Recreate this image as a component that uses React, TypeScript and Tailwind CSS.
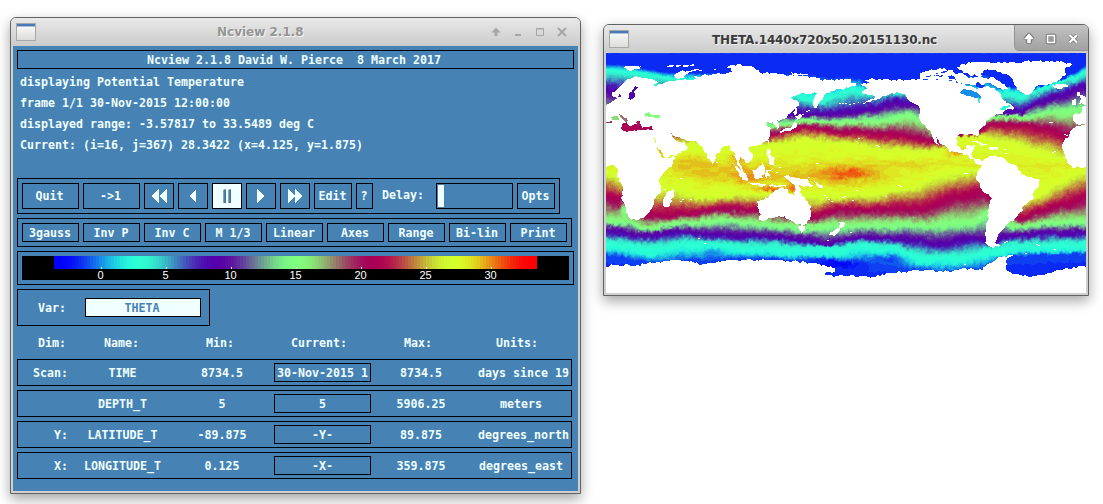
import React from "react";

type Pt = [number, number];

const gauss = (t: number): string => {
  const c = Math.max(0, Math.min(1, t));
  const r = Math.round(255 * c);
  const g = Math.round((255 * (1 - Math.cos(6 * Math.PI * c))) / 2);
  return `rgb(${r},${g},${255 - r})`;
};

const pts = (s: string): Pt[] =>
  s
    .trim()
    .split(/\s+/)
    .map((p) => p.split(",").map(Number) as Pt);

const shift = (line: Pt[], dy: number): Pt[] => line.map(([x, y]) => [x, y + dy]);

const SOUTHERN_COLD = pts("0,572 120,584 250,575 400,580 550,588 640,588 700,594 750,578 850,586 950,614 1050,614 1150,596 1250,578 1440,574");

/* Isotherm curves, north to south. Units are thirds of a pixel. */
const ISOTHERMS: { t: number; line: Pt[] }[] = [
  { t: 0.05, line: pts("0,0 1440,0") },
  { t: 0.044, line: pts("0,32 230,58 560,60 730,72 800,90 1000,70 1130,60 1190,100 1240,100 1300,95 1360,80 1400,60 1440,35") },
  { t: 0.167, line: pts("0,50 90,58 200,75 560,125 640,140 740,110 800,116 900,108 1100,140 1200,115 1250,130 1280,112 1340,92 1400,72 1440,56") },
  { t: 0.333, line: pts("0,110 80,115 560,183 700,180 800,166 860,146 930,150 1180,182 1240,178 1300,145 1350,128 1440,100") },
  { t: 0.5, line: pts("0,190 150,188 480,220 600,200 700,205 830,202 900,185 945,200 980,225 1150,192 1250,190 1340,175 1440,172") },
  { t: 0.667, line: pts("0,208 100,222 490,243 540,230 600,220 700,235 850,243 930,255 990,262 1110,235 1150,212 1240,213 1320,225 1390,248 1440,270") },
  { t: 0.833, line: pts("0,240 250,275 480,275 600,262 700,272 850,290 960,302 1010,285 1080,250 1120,250 1200,268 1300,300 1380,318 1440,330") },
  { t: 0.86, line: pts("0,338 700,335 1000,335 1440,336") },
  { t: 0.833, line: pts("0,350 50,375 170,405 300,425 460,422 620,430 700,432 800,422 900,400 1000,365 1100,348 1250,440 1300,425 1360,390 1400,365 1440,350") },
  { t: 0.667, line: pts("0,430 50,450 130,487 250,480 350,465 450,468 620,488 700,465 800,468 950,465 1050,432 1130,415 1160,440 1240,492 1300,474 1380,450 1440,432") },
  { t: 0.5, line: pts("0,506 60,510 130,525 250,506 350,498 480,515 600,525 700,517 850,517 1000,515 1100,507 1150,480 1220,520 1300,512 1440,508") },
  { t: 0.333, line: pts("0,532 120,545 200,532 300,543 450,546 600,558 670,572 760,550 900,556 1000,570 1100,553 1160,568 1200,546 1300,540 1440,535") },
  { t: 0.19, line: shift(SOUTHERN_COLD, -10) },
  { t: 0.14, line: shift(SOUTHERN_COLD, 16) },
  { t: 0.055, line: pts("0,606 80,620 150,630 230,620 450,618 640,618 700,630 850,640 1000,658 1120,648 1200,610 1440,602") },
  { t: 0.03, line: pts("0,720 1440,720") },
];

/* Warm and cold anomalies: x, y, radius x, radius y, amplitude */
const ANOMALIES = [
  [735, 360, 70, 16, 0.05],
  [680, 372, 190, 32, 0.045],
  [320, 360, 140, 36, 0.03],
  [250, 322, 60, 20, 0.025],
  [495, 408, 50, 9, 0.08],
  [440, 372, 60, 25, 0.04],
  [560, 405, 16, 22, 0.06],
  [1045, 298, 35, 12, 0.05],
  [165, 290, 14, 18, 0.05],
  [395, 310, 25, 25, 0.04],
  [900, 330, 160, 14, 0.015],
  [1390, 325, 20, 12, 0.04],
  [320, 592, 36, 14, -0.04],
  [850, 614, 60, 14, -0.05],
  [700, 632, 60, 14, -0.04],
  [130, 605, 60, 10, 0.02],
  [55, 465, 14, 22, -0.12],
];

const yAt = (line: Pt[], x: number): number => {
  for (let i = 1; i < line.length; i++) {
    if (x <= line[i][0]) {
      const [x0, y0] = line[i - 1];
      const [x1, y1] = line[i];
      const f = (x - x0) / (x1 - x0);
      return y0 + (y1 - y0) * f * f * (3 - 2 * f);
    }
  }
  return line[line.length - 1][1];
};

const hash = (x: number, y: number): number => {
  let h = (Math.imul(x, 374761393) + Math.imul(y, 668265263)) | 0;
  h = Math.imul(h ^ (h >>> 13), 1274126177);
  return ((h ^ (h >>> 16)) >>> 0) / 4294967295;
};

const noise = (x: number, y: number): number => {
  const xi = Math.floor(x);
  const yi = Math.floor(y);
  const s = (f: number) => f * f * (3 - 2 * f);
  const u = s(x - xi);
  const v = s(y - yi);
  const a = hash(xi, yi) * (1 - u) + hash(xi + 1, yi) * u;
  const b = hash(xi, yi + 1) * (1 - u) + hash(xi + 1, yi + 1) * u;
  return (a * (1 - v) + b * v) * 2 - 1;
};

const LEVELS = 90;

const oceanPaths = (): { d: string; fill: string }[] => {
  const runs: string[][] = Array.from({ length: LEVELS + 1 }, () => []);
  const columns = Array.from({ length: 480 }, (_, i) =>
    ISOTHERMS.map((c) => yAt(c.line, i * 3)),
  );
  for (let j = 0; j < 226; j++) {
    let start = 0;
    let current = -1;
    for (let i = 0; i <= 480; i++) {
      let level = -2;
      if (i < 480) {
        const x = i * 3;
        const y =
          j * 3 +
          (j < 22 ? 0.3 : 1) *
            (3 * noise(i / 13, j / 9) + 5 * noise(i / 3.2 + 50, j / 3.5) + 3 * noise(i / 1.4, j / 1.8 + 90));
        const ys = columns[i];
        let k = 1;
        while (k < ys.length - 1 && y > ys[k]) k++;
        const span = Math.max(1, ys[k] - ys[k - 1]);
        const f = Math.max(0, Math.min(1, (y - ys[k - 1]) / span));
        let t = ISOTHERMS[k - 1].t + (ISOTHERMS[k].t - ISOTHERMS[k - 1].t) * f;
        for (const [ax, ay, rx, ry, amp] of ANOMALIES) {
          const q = ((x - ax) / rx) ** 2 + ((y - ay) / ry) ** 2;
          if (q < 5) t += amp * Math.exp(-q);
        }
        if (t > 0.8) t += 0.01 * noise(i / 9 + 7, j / 2.5);
        level = Math.max(0, Math.min(LEVELS, Math.round(t * LEVELS)));
      }
      if (level !== current) {
        if (current >= 0) runs[current].push(`M${start} ${j}h${i - start}v1h${start - i}z`);
        start = i;
        current = level;
      }
    }
  }
  return runs
    .map((r, n) => ({ d: r.join(""), fill: gauss(n / LEVELS) }))
    .filter((p) => p.d.length > 0);
};

const OCEAN = oceanPaths();

/* Breaks straight edges into a ragged coastline. */
const coast = (s: string, amp = 4): string => {
  const p = pts(s);
  const out: string[] = [];
  p.forEach(([x0, y0], i) => {
    const [x1, y1] = p[(i + 1) % p.length];
    const len = Math.hypot(x1 - x0, y1 - y0);
    const n = Math.max(1, Math.floor(len / 7));
    for (let k = 0; k < n; k++) {
      const f = k / n;
      const d = k === 0 ? 0 : amp * (hash(Math.round(x0 + k * 17), Math.round(y0 + k * 31)) * 2 - 1);
      const nx = len ? -(y1 - y0) / len : 0;
      const ny = len ? (x1 - x0) / len : 0;
      out.push(`${(x0 + (x1 - x0) * f + nx * d).toFixed(1)},${(y0 + (y1 - y0) * f + ny * d).toFixed(1)}`);
    }
  });
  return out.join(" ");
};

const LAND = [
  // Eurasia and Africa
  "-9,156 8,152 20,145 36,134 46,130 40,122 34,136 20,134 18,118 45,98 58,84 80,74 100,72 125,76 145,80 155,88 150,94 170,92 195,84 215,80 236,78 270,76 262,70 290,66 330,64 385,56 360,42 395,34 425,40 445,44 462,58 520,64 545,70 570,66 605,68 610,74 640,74 642,80 700,80 735,78 735,90 752,92 748,100 720,102 712,112 690,108 672,120 655,126 650,140 640,146 636,158 624,166 620,148 626,132 640,118 618,122 600,122 580,124 555,134 572,142 580,156 560,175 545,190 530,198 518,204 512,200 520,222 514,228 504,214 500,208 484,206 480,216 494,226 492,246 484,262 470,270 452,278 430,282 430,292 442,308 438,320 426,332 416,320 402,312 400,324 412,352 404,350 392,334 390,318 386,300 374,292 370,276 356,280 344,292 328,306 325,326 318,334 304,316 292,282 284,278 265,264 240,262 212,252 196,240 206,258 218,266 236,268 246,282 224,300 176,314 164,292 140,250 160,300 174,316 208,312 200,332 168,366 160,380 164,410 158,424 144,440 142,460 130,478 112,496 76,500 66,486 58,462 45,435 52,412 46,390 34,372 38,350 22,336 -9,340",
  // North and South America
  "772,84 800,76 850,80 900,80 945,76 960,82 1000,78 1040,84 1075,92 1090,100 1120,106 1150,100 1176,116 1192,140 1212,152 1226,168 1196,174 1180,184 1156,192 1140,204 1142,214 1118,234 1120,256 1108,246 1090,244 1060,244 1050,256 1052,276 1066,290 1082,288 1086,274 1106,276 1100,296 1096,304 1110,318 1128,324 1150,308 1190,314 1204,328 1236,342 1244,362 1262,370 1302,382 1300,398 1284,416 1282,440 1252,458 1244,478 1224,504 1202,514 1194,528 1180,540 1174,556 1168,570 1184,580 1156,582 1138,568 1140,520 1148,480 1158,436 1128,410 1112,382 1116,352 1128,336 1108,328 1088,310 1060,300 1030,296 1020,282 1006,274 990,250 1000,276 984,262 976,238 952,214 940,196 940,164 922,150 906,140 896,124 880,120 850,124 830,130 812,140 800,142 790,148 750,152 780,146 808,130 782,124 766,118 784,106 764,96 790,90",
  // Canadian Arctic
  "940,62 960,54 1000,46 1040,52 1050,64 1070,60 1086,76 1110,72 1140,76 1164,74 1196,92 1206,108 1190,112 1160,96 1140,90 1120,102 1086,92 1030,82 940,80",
  "1052,42 1072,32 1130,26 1200,28 1190,34 1160,40 1124,62 1128,70 1090,66 1060,50",
  // Greenland
  "1134,44 1160,36 1200,30 1260,24 1310,26 1360,26 1398,34 1376,46 1380,62 1366,78 1330,92 1296,98 1284,110 1272,124 1260,126 1240,114 1226,96 1222,84 1206,66 1182,56",
  "1338,96 1360,92 1384,96 1388,102 1366,107 1344,104",
  // Western Europe and West Africa
  "1412,120 1420,114 1424,126 1446,138 1446,158 1418,154 1424,140",
  "1398,142 1412,138 1412,154 1398,156",
  "1404,184 1426,180 1430,160 1446,160 1446,212 1414,214 1404,206",
  "1446,214 1414,218 1398,228 1390,244 1374,264 1370,290 1376,306 1388,334 1408,344 1446,340",
  // Antarctica
  "-6,638 95,636 140,630 206,622 250,626 300,635 380,620 480,622 560,625 640,634 688,646 686,656 655,662 660,668 720,668 800,672 850,660 930,652 1040,655 1070,645 1130,652 1145,632 1180,612 1222,606 1200,625 1202,655 1250,668 1290,671 1320,662 1360,650 1446,638 1446,726 -6,726",
  // Australia
  "452,446 486,434 500,420 522,404 546,408 546,418 566,426 570,394 578,396 590,430 606,444 616,460 614,484 602,512 590,518 566,512 552,500 536,490 504,494 480,502 460,500 464,484",
  "576,520 596,520 594,534 586,540",
  // New Guinea and Indonesia
  "524,366 548,366 576,374 602,380 610,388 628,404 600,400 584,396 560,392 546,380",
  "438,350 452,348 470,330 478,346 470,376 446,376",
  "378,330 396,342 424,370 424,388 406,372 392,352",
  "420,386 450,390 480,392 478,398 440,396",
  "490,396 540,398 540,402 492,402",
  "478,350 500,346 484,354 494,376 486,366 480,380",
  "620,382 640,396 652,404 636,402",
  // Philippines, Taiwan and Japan
  "482,286 490,288 492,306 506,316 506,338 494,336 486,310",
  "484,262 490,262 486,274",
  "520,238 532,228 552,226 564,208 570,206 572,222 560,228 540,234 524,240",
  "568,190 580,182 590,188 574,200",
  "562,150 570,160 572,184 564,186",
  // New Zealand
  "690,496 702,508 718,512 712,522 700,528 702,512",
  "698,526 704,532 684,549 662,549",
  // Madagascar
  "182,420 200,406 204,416 190,460 174,462 172,444",
  // Caribbean
  "1088,264 1110,262 1148,278 1130,278 1110,268",
  "1150,282 1178,284 1176,292 1150,288",
  // Arctic islands
  "38,42 70,38 108,38 100,48 66,52",
  "178,38 264,34 262,40 200,41",
  "204,66 222,56 260,50 290,52 250,58 232,76 210,76",
  "556,58 606,62 604,68 560,66",
  "1164,568 1184,578 1166,576",
];

const LAKES: { p: string; t: number }[] = [
  // Mediterranean
  { p: "-6,206 16,204 22,208 -6,212", t: 0.62 },
  { p: "14,192 34,188 40,200 20,202", t: 0.54 },
  { p: "40,184 50,188 66,204 58,208 44,194", t: 0.59 },
  { p: "48,212 62,206 70,218 84,214 94,214 110,224 136,218 140,230 112,230 84,232 62,236 46,228", t: 0.667 },
  { p: "90,206 102,204 104,216 94,218", t: 0.63 },
  // Black Sea
  { p: "116,182 128,178 138,186 164,188 162,194 116,192", t: 0.5 },
  // Baltic
  { p: "88,100 96,102 84,114 88,128 74,140 66,138 70,120", t: 0.32 },
  // White Sea
  { p: "142,96 158,92 156,97", t: 0.15 },
  // Hudson Bay
  { p: "1062,120 1074,106 1090,110 1112,116 1124,128 1126,136 1100,132 1080,128", t: 0.09 },
  { p: "1116,132 1124,136 1122,150 1116,146", t: 0.13 },
  { p: "1108,92 1118,86 1128,96 1142,94 1128,106 1112,102", t: 0.05 },
  { p: "1026,70 1044,68 1050,80 1030,78", t: 0.05 },
  { p: "960,68 1010,66 1010,69 960,72", t: 0.05 },
  { p: "984,60 1024,54 1010,60", t: 0.05 },
  // Gulf of St Lawrence
  { p: "1178,164 1200,160 1216,158 1190,172", t: 0.15 },
];

const ISLANDS: Pt[] = [
  [276, 557], [294, 571], [756, 257], [632, 330], [750, 412], [838, 430], [878, 396], [884, 400],
  [1074, 362], [1080, 362], [1120, 494], [664, 563], [230, 440], [222, 444], [254, 440], [222, 376],
  [812, 276], [818, 280], [732, 537], [740, 441], [714, 430], [710, 432], [1290, 575], [1296, 577],
  [1330, 207], [1336, 208], [1340, 297], [1346, 294], [1376, 244], [1382, 246], [656, 428], [662, 434],
  [668, 440], [676, 446], [600, 378], [606, 372], [520, 344], [512, 358], [1196, 290], [1198, 300],
  [1076, 634], [1196, 567], [1202, 566], [176, 408], [700, 150], [708, 151], [718, 152], [730, 153],
  [742, 152], [588, 184], [600, 176], [606, 172], [326, 50], [330, 328], [1344, 590], [1258, 601],
];

const OceanMap = () => (
  <svg viewBox="0 0 480 240" className="block h-[240px] w-[480px] bg-white" shapeRendering="crispEdges">
    {OCEAN.map((p) => (
      <path key={p.fill} d={p.d} fill={p.fill} />
    ))}
    <g transform="scale(0.333333)">
      {LAND.map((p) => (
        <polygon key={p} points={coast(p)} fill="#fff" />
      ))}
      {LAKES.map((l) => (
        <polygon key={l.p} points={coast(l.p, 3)} fill={gauss(l.t)} />
      ))}
      {ISLANDS.map(([x, y]) => (
        <rect key={`${x}-${y}`} x={Math.floor(x / 3) * 3} y={Math.floor(y / 3) * 3} width={6} height={3} fill="#fff" />
      ))}
    </g>
  </svg>
);

const WindowIcon = () => (
  <svg width="20" height="18" viewBox="0 0 20 18" shapeRendering="crispEdges">
    <defs>
      <linearGradient id="page" x1="0" y1="0" x2="0" y2="1">
        <stop offset="0" stopColor="#fdfdfc" />
        <stop offset="1" stopColor="#dcddd9" />
      </linearGradient>
    </defs>
    <rect x="0.5" y="0.5" width="19" height="17" fill="url(#page)" stroke="#a5a8a8" />
    <rect x="1" y="1" width="18" height="2" fill="#4a7ab5" />
    <rect x="1" y="3" width="18" height="1" fill="#a9bdd6" />
  </svg>
);

const Btn = ({ children, className }: { children?: React.ReactNode; className: string }) => (
  <button type="button" className={`flex items-center justify-center border border-black ${className}`}>
    {children}
  </button>
);

const Arrow = ({ d }: { d: string }) => (
  <svg className="shrink-0" width="20" height="16" viewBox="0 0 20 16" fill="#f0ffff" shapeRendering="crispEdges">
    <path d={d} />
  </svg>
);

const ColorBar = () => (
  <div className="flex h-[34px] w-[557px] border border-black p-1">
    <svg width="547" height="24" viewBox="0 0 547 24" className="block bg-black" shapeRendering="crispEdges">
      {Array.from({ length: 161 }, (_, i) => (
        <rect key={i} x={32 + i * 3} y="0" width="3" height="13" fill={gauss((i - 1) / 158)} />
      ))}
      {[0, 5, 10, 15, 20, 25, 30].map((v, i) => (
        <g key={v} fill="#fff">
          <rect x={79 + i * 65} y="11" width="1" height="2" />
          <text
            x={78.5 + i * 65}
            y="23"
            textAnchor="middle"
            fontSize="11"
            fontWeight="400"
            fontFamily="Liberation Sans, sans-serif"
          >
            {v}
          </text>
        </g>
      ))}
    </svg>
  </div>
);

const ROWS = [
  { dim: "Scan:", name: "TIME", min: "8734.5", cur: "30-Nov-2015 1", max: "8734.5", units: "days since 19" },
  { dim: "", name: "DEPTH_T", min: "5", cur: "5", max: "5906.25", units: "meters" },
  { dim: "Y:", name: "LATITUDE_T", min: "-89.875", cur: "-Y-", max: "89.875", units: "degrees_north" },
  { dim: "X:", name: "LONGITUDE_T", min: "0.125", cur: "-X-", max: "359.875", units: "degrees_east" },
];

const Frame = ({ className, children }: { className: string; children: React.ReactNode }) => (
  <section
    className={`flex flex-col rounded-t-[6px] border border-[#636363] bg-[#cfcfcf] shadow-[0_5px_13px_0_rgba(0,0,0,0.36)] ${className}`}
  >
    {children}
  </section>
);

const ControlWindow = () => (
  <Frame className="mt-[17px] ml-[10px] h-[477px] w-[571px]">
    <header className="flex h-7 shrink-0 items-center rounded-t-[5px] bg-linear-to-b from-[#e9e9e9] to-[#cbcbcb] pl-[5px]">
      <WindowIcon />
      <h1 className="ml-[181px] w-[92px] whitespace-nowrap font-['DejaVu_Sans'] text-[12px] font-bold text-[#959595] [text-shadow:1px_1px_0_#f5f5f5]">
        Ncview 2.1.8
      </h1>
      <svg className="ml-[182px]" width="80" height="14" viewBox="0 0 80 14" fill="none" stroke="#a6a6a6">
        <path d="M5 2.500L0.500 7.500H3.500V11h3V7.500H9.500z" fill="#a6a6a6" stroke="none" />
        <path d="M24 10h6" strokeWidth="2" />
        <path d="M45.500 3.500h7v7h-7z M45 4h8" />
        <path d="M67 3l8 8M75 3l-8 8" strokeWidth="2" />
      </svg>
    </header>
    <main className="mx-0.5 h-[445px] bg-[#4682b4] px-1 pt-1 font-['DejaVu_Sans_Mono',monospace] text-[11.63px] leading-[21px] font-bold text-[#f0ffff]">
      <div className="flex h-[19px] w-[557px] items-center justify-center border border-black pt-0.5 pr-[3px] whitespace-pre">
        {"Ncview 2.1.8 David W. Pierce  8 March 2017"}
      </div>
      <div className="h-[109px] pt-[3px] pl-[3px] whitespace-pre">
        <p>displaying Potential Temperature</p>
        <p>frame 1/1 30-Nov-2015 12:00:00</p>
        <p>displayed range: -3.57817 to 33.5489 deg C</p>
        <p>Current: (i=16, j=367) 28.3422 (x=4.125, y=1.875)</p>
      </div>
      <div className="flex h-9 w-[543px] gap-1 border border-black p-1">
        <Btn className="w-[57px] pr-0.5">Quit</Btn>
        <Btn className="w-[57px] pr-0.5">-&gt;1</Btn>
        <Btn className="w-[30px]"><Arrow d="M10 0v16L2 8zM18 0v16L10 8z" /></Btn>
        <Btn className="w-[30px]"><Arrow d="M13 1v14L6 8z" /></Btn>
        <Btn className="w-[30px] bg-[#f0ffff]">
          <svg width="8" height="14" fill="#4682b4" stroke="#4a6480" shapeRendering="crispEdges">
            <path d="M.5.5h2v13h-2zM5.500.5h2v13h-2z" strokeWidth=".6" />
          </svg>
        </Btn>
        <Btn className="w-[30px]"><Arrow d="M6 1v14l7-7z" /></Btn>
        <Btn className="w-[30px]"><Arrow d="M3 1v14l7-7zM10 1v14l7-7z" /></Btn>
        <Btn className="w-[38px] pr-px">Edit</Btn>
        <Btn className="w-[17px] pr-px">?</Btn>
        <label className="flex w-[55px] items-center pb-0.5 pl-[5px]">Delay:</label>
        <div className="flex w-[77px] border border-black p-px">
          <span className="w-1.5 bg-[#f0ffff]" />
        </div>
        <Btn className="w-[38px] pr-px">Opts</Btn>
      </div>
      <div className="mt-1 flex h-[29px] w-[555px] gap-1 border border-black p-1">
        {["3gauss", "Inv P", "Inv C", "M 1/3", "Linear", "Axes", "Range", "Bi-lin", "Print"].map((b) => (
          <Btn key={b} className="w-[57px] pt-0.5 pr-px">{b}</Btn>
        ))}
      </div>
      <div className="mt-1">
        <ColorBar />
      </div>
      <div className="mt-1 flex h-[37px] w-[193px] border border-black pt-2">
        <span className="w-[67px] pt-px pl-5 leading-[18px]">Var:</span>
        <Btn className="h-[19px] w-[116px] bg-[#f0ffff] pt-0.5 pr-0.5 text-[#4682b4]">THETA</Btn>
      </div>
      <div className="flex h-[33px] items-center pt-px pl-[21px]">
        <span className="w-[66px]">Dim:</span>
        <span className="w-[102px]">Name:</span>
        <span className="w-[85px]">Min:</span>
        <span className="w-[113px]">Current:</span>
        <span className="w-[92px]">Max:</span>
        <span>Units:</span>
      </div>
      <div className="flex flex-col gap-1">
        {ROWS.map((r) => (
          <div key={r.name} className="flex h-[27px] w-[555px] items-center border border-black leading-[23px] whitespace-pre">
            <span className="w-[50px] pt-0.5 text-right">{r.dim}</span>
            <span className="w-[109px] pt-0.5 text-center">{r.name}</span>
            <span className="w-[90px] pt-0.5 text-center">{r.min}</span>
            <span className="ml-[7px] flex h-[19px] w-[97px] items-center justify-center overflow-hidden border border-black pt-0.5 leading-[17px]">
              {r.cur}
            </span>
            <span className="w-[100px] pt-0.5 text-center">{r.max}</span>
            <span className={`w-[100px] pt-0.5 text-center ${r.units.length > 12 ? "pl-[5px]" : ""}`}>{r.units}</span>
          </div>
        ))}
      </div>
    </main>
  </Frame>
);

const MapWindow = () => (
  <Frame className="mt-6 ml-[22px] h-[272px] w-[486px]">
    <header className="flex h-7 shrink-0 rounded-t-[5px] bg-linear-to-b from-[#e9e9e9] to-[#cbcbcb] pl-[5px]">
      <div className="pt-[5px]">
        <WindowIcon />
      </div>
      <h1 className="ml-[83px] w-[302px] whitespace-nowrap pt-[7px] font-['DejaVu_Sans'] text-[12px] leading-[16px] font-bold tracking-[-0.17px] text-[#3a3a3a] [text-shadow:1px_1px_0_#f2f2f2]">
        THETA.1440x720x50.20151130.nc
      </h1>
      <div className="h-[26px] w-[74px] rounded-tr-[5px] rounded-bl-[5px] border-b border-l border-[#929292] bg-linear-to-b from-[#c2c2c2] to-[#a2a2a2]">
        <svg width="73" height="26" viewBox="0 0 73 26" fill="none">
          <g stroke="#737373" strokeWidth="3.600" strokeLinejoin="round">
            <path d="M14 9.500l-3.500 4h2.500v4h2v-4h2.500z" />
            <path d="M32.500 10.500h7v7h-7z" />
            <path d="M54.500 10l7.500 7.500M62 10l-7.500 7.500" />
          </g>
          <g stroke="#fff" strokeWidth="1.500">
            <path d="M14 9.500l-3.500 4h2.500v4h2v-4h2.500z" fill="#fff" />
            <path d="M32.500 10.500h7v7h-7z" fill="#9a9a9a" />
            <path d="M54.500 10l7.500 7.500M62 10l-7.500 7.500" strokeWidth="2.200" />
          </g>
        </svg>
      </div>
    </header>
    <div className="mx-0.5">
      <OceanMap />
    </div>
  </Frame>
);

export default function App() {
  return (
    <div className="flex h-[504px] w-[1103px] items-start overflow-hidden bg-white">
      <ControlWindow />
      <MapWindow />
    </div>
  );
}
